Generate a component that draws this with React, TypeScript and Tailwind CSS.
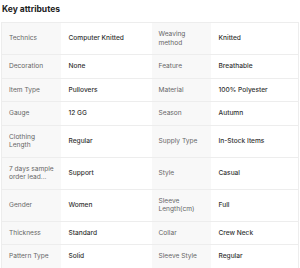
import React from 'react';

const rows: [string, string, string, string][] = [
  ['Technics', 'Computer Knitted', 'Weaving method', 'Knitted'],
  ['Decoration', 'None', 'Feature', 'Breathable'],
  ['Item Type', 'Pullovers', 'Material', '100% Polyester'],
  ['Gauge', '12 GG', 'Season', 'Autumn'],
  ['Clothing Length', 'Regular', 'Supply Type', 'In-Stock Items'],
  ['7 days sample order lead...', 'Support', 'Style', 'Casual'],
  ['Gender', 'Women', 'Sleeve Length(cm)', 'Full'],
  ['Thickness', 'Standard', 'Collar', 'Crew Neck'],
  ['Pattern Type', 'Solid', 'Sleeve Style', 'Regular'],
];

const App: React.FC = () => {
  return (
    <div className="w-[300px] h-[268px] bg-white overflow-hidden pl-[1px] pr-[1px] pt-[3px] font-['Inter',sans-serif]">
      <h2 className="text-[8.5px] leading-[12px] font-bold text-[#222] pl-[1px] mb-[7px]">Key attributes</h2>
      <table className="w-full border-collapse table-fixed text-[6.6px] leading-[8.5px]">
        <colgroup>
          <col className="w-[59px]" />
          <col className="w-[91px]" />
          <col className="w-[59px]" />
          <col />
        </colgroup>
        <tbody>
          {rows.map(([l1, v1, l2, v2]) => (
            <tr key={l1} className="border border-[#ededed]">
              <td className="bg-[#f8f8f8] text-[#666] pl-[7px] pr-[3px] py-[7px] align-middle">{l1}</td>
              <td className="text-[#333] font-medium px-[8px] py-[7px] align-middle">{v1}</td>
              <td className="bg-[#f8f8f8] text-[#666] pl-[7px] pr-[3px] py-[7px] align-middle">{l2}</td>
              <td className="text-[#333] font-medium px-[8px] py-[7px] align-middle">{v2}</td>
            </tr>
          ))}
        </tbody>
      </table>
    </div>
  );
};

export default App;
